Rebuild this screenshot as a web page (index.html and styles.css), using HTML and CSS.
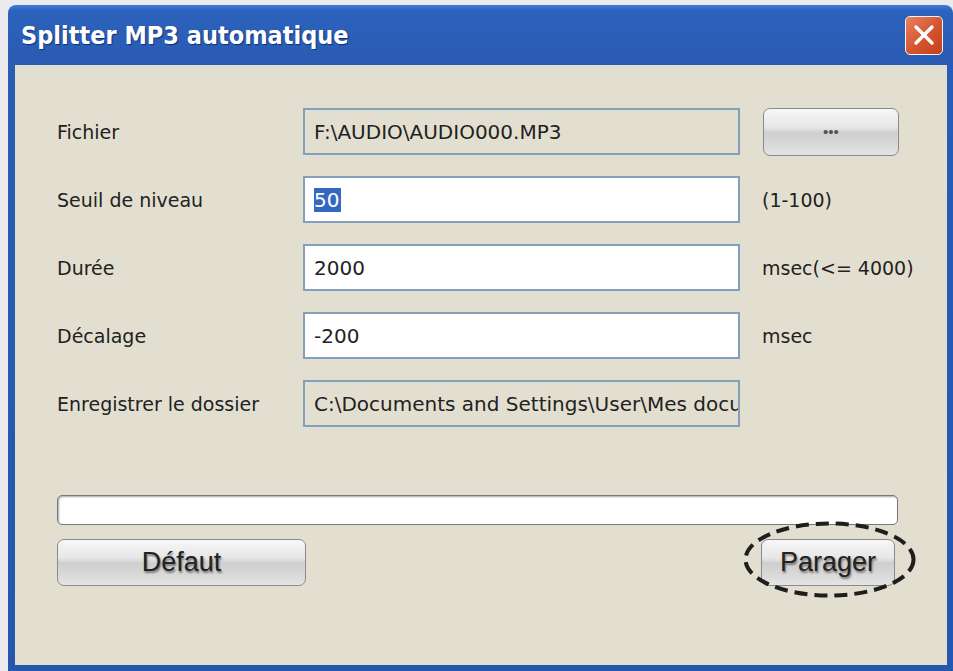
FILE: index.html
```html
<!DOCTYPE html>
<html lang="fr">
<head>
    <meta charset="UTF-8">
    <title>Splitter MP3 automatique</title>
    <link rel="stylesheet" href="styles.css">
</head>
<body>

    <!-- Dialog window -->
    <div class="window">
        <div class="titlebar">
            <span class="title">Splitter MP3 automatique</span>
            <span class="close">
                <svg width="24" height="24" viewBox="0 0 24 24">
                    <path d="M4 4 L20 20 M20 4 L4 20" stroke="#fff" stroke-width="3.4" stroke-linecap="round"/>
                </svg>
            </span>
        </div>

        <div class="client">
            <div class="form">
                <div class="label">Fichier</div>
                <div class="field readonly">F:\AUDIO\AUDIO000.MP3</div>
                <div><button class="btn browse">&bull;&bull;&bull;</button></div>

                <div class="label">Seuil de niveau</div>
                <div class="field"><span class="sel">50</span></div>
                <div class="hint">(1-100)</div>

                <div class="label">Durée</div>
                <div class="field">2000</div>
                <div class="hint">msec(&lt;= 4000)</div>

                <div class="label">Décalage</div>
                <div class="field">-200</div>
                <div class="hint">msec</div>

                <div class="label">Enregistrer le dossier</div>
                <div class="field readonly">C:\Documents and Settings\User\Mes documents</div>
                <div></div>
            </div>

            <div class="progress"></div>

            <div class="actions">
                <button class="btn big default">Défaut</button>
                <div class="split-wrap">
                    <button class="btn big split">Parager</button>
                    <!-- annotation circle -->
                    <svg class="mark" width="175" height="79" viewBox="0 0 175 79">
                        <ellipse cx="87.5" cy="39.5" rx="84" ry="36" fill="none" stroke="#1e1e1e" stroke-width="4" stroke-dasharray="13 7"/>
                    </svg>
                </div>
            </div>
        </div>
    </div>

</body>
</html>
```

FILE: styles.css
```css
body {
    margin: 0;
    padding: 5px 0 0 8px;
    background-color: #ebebef;
    font-family: "DejaVu Sans", Verdana, sans-serif;
    color: #222;
}

/* Window frame */
.window {
    height: 666px;
    display: flex;
    flex-direction: column;
    border-radius: 8px 8px 0 0;
    background: linear-gradient(#3f7ad8 0, #2c62bd 6px, #2a5cb3 50px, #2557ad 100%);
}

.titlebar {
    height: 60px;
    flex: none;
    display: flex;
    align-items: center;
    justify-content: space-between;
    padding: 0 10px 0 13px;
}

.title {
    font-family: "DejaVu Sans Condensed", "DejaVu Sans", sans-serif;
    font-weight: bold;
    font-size: 25px;
    color: #fff;
    text-shadow: 1px 1px 1px #0c2f78;
}

.close {
    width: 36px;
    height: 37px;
    display: flex;
    align-items: center;
    justify-content: center;
    border: 1.5px solid #f4f4f4;
    border-radius: 5px;
    background: linear-gradient(135deg, #e8825e, #d4532f 55%, #c4431f);
}

/* Client area */
.client {
    flex: 1;
    margin: 0 6px 6px 7px;
    background-color: #e3dfd0;
    padding: 43px 0 0 42px;
}

.form {
    display: grid;
    grid-template-columns: 224px 437px 160px;
    grid-auto-rows: 47px;
    row-gap: 21px;
    column-gap: 22px;
    align-items: center;
}

.label {
    font-size: 19px;
}

.field {
    height: 47px;
    box-sizing: border-box;
    border: 2px solid #839fbd;
    background-color: #fff;
    font-size: 20px;
    padding: 0 9px;
    display: flex;
    align-items: center;
    white-space: nowrap;
    overflow: hidden;
}

.field.readonly {
    background-color: #e3dfd0;
}

.sel {
    background-color: #3569c0;
    color: #fff;
    padding-right: 2px;
}

.hint {
    font-size: 19px;
}

/* Glossy buttons */
.btn {
    border: 1.5px solid #8a8a8a;
    border-radius: 7px;
    background: linear-gradient(#f7f7f7 0, #e6e6e6 40%, #cfcfcf 52%, #d8d8d8 75%, #e4e4e4 100%);
    color: #222;
    cursor: pointer;
}

.browse {
    width: 136px;
    height: 48px;
    font-size: 15px;
    letter-spacing: 0;
    color: #555;
    margin-left: 1px;
}

.progress {
    width: 841px;
    height: 30px;
    box-sizing: border-box;
    margin-top: 68px;
    border: 1.5px solid #7a7a7a;
    border-radius: 5px;
    background-color: #fff;
    box-shadow: inset 1px 1px 2px rgba(0, 0, 0, 0.35);
}

.actions {
    width: 838px;
    margin-top: 14px;
    display: flex;
    justify-content: space-between;
}

.big {
    height: 47px;
    font-family: "Liberation Sans", Arial, sans-serif;
    font-size: 27px;
    text-shadow: 1px 2px 2px rgba(0, 0, 0, 0.45);
}

.default {
    width: 249px;
}

.split-wrap {
    position: relative;
}

.split {
    width: 134px;
}

.mark {
    position: absolute;
    left: -19px;
    top: -19px;
}
```
